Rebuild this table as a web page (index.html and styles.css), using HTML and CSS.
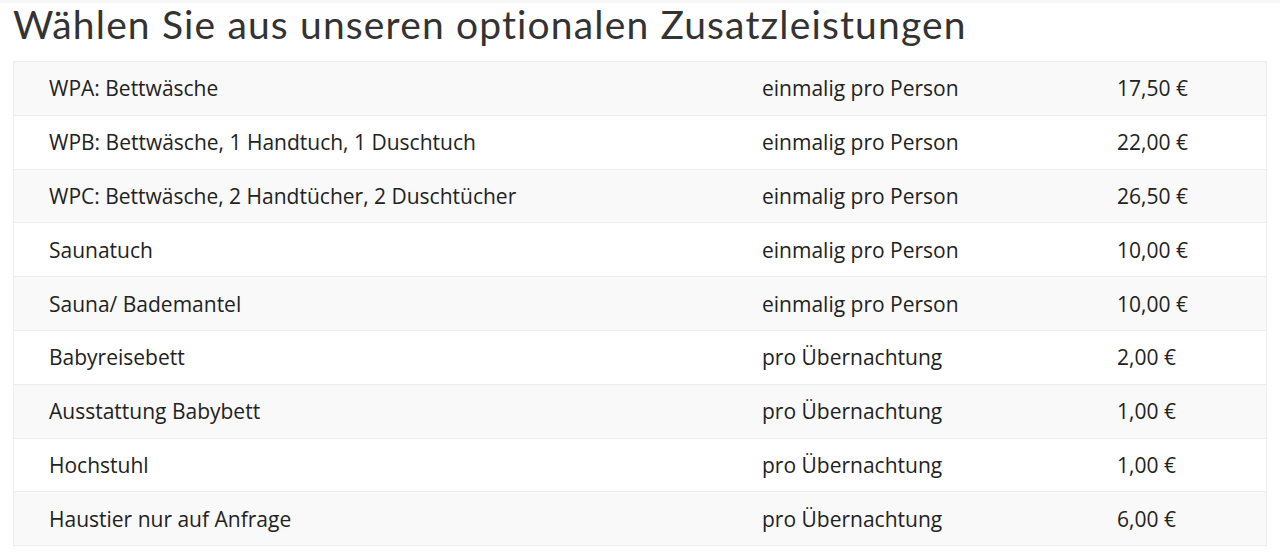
FILE: index.html
```html
<!DOCTYPE html>
<html lang="de">
<head>
<meta charset="utf-8">
<title>Zusatzleistungen</title>
<link rel="stylesheet" href="styles.css">
</head>
<body>
<div class="page">
  <h1 class="title">Wählen Sie aus unseren optionalen Zusatzleistungen</h1>
  <div class="table">
    <div class="row odd"><div class="cell">WPA: Bettwäsche</div><div class="cell">einmalig pro Person</div><div class="cell">17,50 €</div></div>
    <div class="row"><div class="cell">WPB: Bettwäsche, 1 Handtuch, 1 Duschtuch</div><div class="cell">einmalig pro Person</div><div class="cell">22,00 €</div></div>
    <div class="row odd"><div class="cell">WPC: Bettwäsche, 2 Handtücher, 2 Duschtücher</div><div class="cell">einmalig pro Person</div><div class="cell">26,50 €</div></div>
    <div class="row"><div class="cell">Saunatuch</div><div class="cell">einmalig pro Person</div><div class="cell">10,00 €</div></div>
    <div class="row odd"><div class="cell">Sauna/ Bademantel</div><div class="cell">einmalig pro Person</div><div class="cell">10,00 €</div></div>
    <div class="row"><div class="cell">Babyreisebett</div><div class="cell">pro Übernachtung</div><div class="cell">2,00 €</div></div>
    <div class="row odd"><div class="cell">Ausstattung Babybett</div><div class="cell">pro Übernachtung</div><div class="cell">1,00 €</div></div>
    <div class="row"><div class="cell">Hochstuhl</div><div class="cell">pro Übernachtung</div><div class="cell">1,00 €</div></div>
    <div class="row odd"><div class="cell">Haustier nur auf Anfrage</div><div class="cell">pro Übernachtung</div><div class="cell">6,00 €</div></div>
  </div>
</div>
</body>
</html>
```

FILE: styles.css
```css
html, body {
  margin: 0;
  padding: 0;
  background: #ffffff;
}
.page {
  padding: 0 13px;
  border-top: 3px solid #f6f6f6;
}
.title {
  margin: 0;
  height: 58px;
  font-family: "Lato", "Open Sans", sans-serif;
  font-weight: 400;
  font-size: 39px;
  line-height: 42px;
  letter-spacing: 1.15px;
  color: #333333;
}
.table {
  border: 1px solid #eeeeee;
  font-family: "Open Sans", sans-serif;
  font-size: 21px;
  color: #222222;
}
.row {
  display: grid;
  grid-template-columns: 713px 355px 1fr;
  height: 52.8px;
  align-items: center;
  border-top: 1px solid #eeeeee;
}
.row:first-child {
  border-top: 0;
}
.row.odd {
  background: #f9f9f9;
}
.cell {
  padding-left: 35px;
  white-space: nowrap;
}
```
